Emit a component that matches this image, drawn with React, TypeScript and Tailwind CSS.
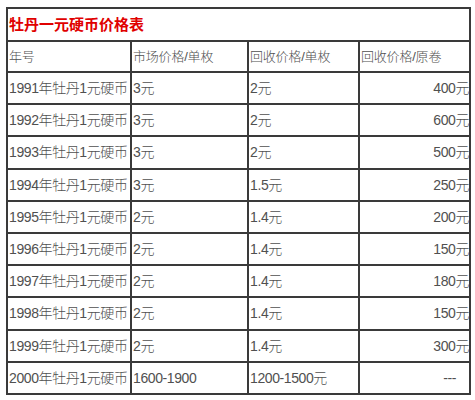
import React from "react";

const rows: [string, string, string, string][] = [
  ["1991年牡丹1元硬币", "3元", "2元", "400元"],
  ["1992年牡丹1元硬币", "3元", "2元", "600元"],
  ["1993年牡丹1元硬币", "3元", "2元", "500元"],
  ["1994年牡丹1元硬币", "3元", "1.5元", "250元"],
  ["1995年牡丹1元硬币", "2元", "1.4元", "200元"],
  ["1996年牡丹1元硬币", "2元", "1.4元", "150元"],
  ["1997年牡丹1元硬币", "2元", "1.4元", "180元"],
  ["1998年牡丹1元硬币", "2元", "1.4元", "150元"],
  ["1999年牡丹1元硬币", "2元", "1.4元", "300元"],
  ["2000年牡丹1元硬币", "1600-1900", "1200-1500元", "---"],
];

const cell = "border-2 border-[#3a3a3a] leading-none";

export default function App() {
  return (
    <div
      className="w-[475px] h-[400px] bg-white pl-[6px] pt-[7px]"
      style={{ fontFamily: '"Liberation Sans", "Noto Sans CJK SC", sans-serif' }}
    >
      <table className="border-collapse w-[463px] table-fixed text-[#505050] text-[14px] font-light tracking-[-0.4px]">
        <colgroup>
          <col className="w-[124px]" />
          <col className="w-[117px]" />
          <col className="w-[111px]" />
          <col className="w-[111px]" />
        </colgroup>
        <tbody>
          <tr className="h-[33px]">
            <td
              colSpan={4}
              className={`${cell} px-[1px] text-[#e00000] font-bold text-[15px] tracking-normal`}
            >
              牡丹一元硬币价格表
            </td>
          </tr>
          <tr className="h-[31px]">
            {["年号", "市场价格/单枚", "回收价格/单枚", "回收价格/原卷"].map((h) => (
              <td key={h} className={`${cell} px-[1px] text-[13px] tracking-[-0.2px]`}>
                {h}
              </td>
            ))}
          </tr>
          {rows.map((r, i) => (
            <tr key={i} className="h-[32.2px]">
              <td className={`${cell} px-[1px] whitespace-nowrap`}>{r[0]}</td>
              <td className={`${cell} px-[1px]`}>{r[1]}</td>
              <td className={`${cell} px-[1px]`}>{r[2]}</td>
              <td
                className={
                  r[3] === "---"
                    ? `${cell} pr-[13px] text-right`
                    : `${cell} pr-0 text-right`
                }
              >
                {r[3]}
              </td>
            </tr>
          ))}
        </tbody>
      </table>
    </div>
  );
}
